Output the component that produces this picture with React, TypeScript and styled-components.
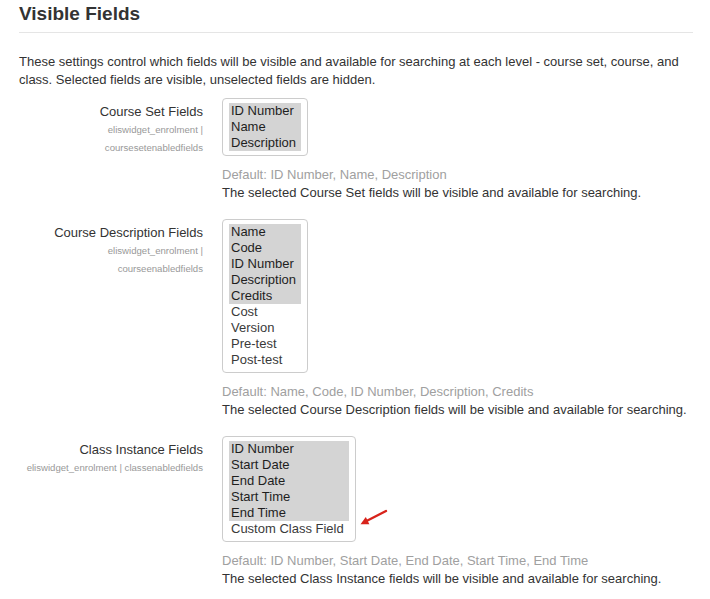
import React from "react";
import styled, { createGlobalStyle } from "styled-components";

const GlobalStyle = createGlobalStyle`
  html, body {
    margin: 0;
    padding: 0;
    background: #ffffff;
  }
  body {
    font-family: "Liberation Sans", Arial, Helvetica, sans-serif;
    color: #333333;
    -webkit-font-smoothing: antialiased;
  }
`;

const Page = styled.div`
  width: 674px;
  padding: 3px 0 0 19px;
  font-size: 13px;
  line-height: 18px;
`;

const Heading = styled.h2`
  margin: 0;
  padding-bottom: 7px;
  font-size: 19px;
  line-height: 22px;
  font-weight: 700;
  color: #333333;
  border-bottom: 1px solid #e5e5e5;
`;

const Intro = styled.p`
  margin: 20px 0 9px;
  color: #333333;
`;

const SettingRow = styled.div`
  display: grid;
  grid-template-columns: 184px 1fr;
  column-gap: 19px;
  margin-bottom: 17px;
`;

const LabelCol = styled.div`
  padding-top: 5px;
  text-align: right;
`;

const LabelText = styled.div`
  color: #333333;
`;

const SettingName = styled.div`
  font-size: 9.6px;
  line-height: 18px;
  color: #999999;
`;

const ContentCol = styled.div`
  display: flex;
  flex-direction: column;
  align-items: flex-start;
`;

const SelectWrap = styled.div`
  position: relative;
  display: inline-block;
`;

const ListBox = styled.div`
  display: inline-flex;
  flex-direction: column;
  padding: 4px 6px;
  border: 1px solid #cccccc;
  border-radius: 4px;
  background: #ffffff;
`;

const Option = styled.div<{ $selected?: boolean }>`
  padding: 0 5px 0 2px;
  line-height: 16px;
  font-size: 13px;
  white-space: nowrap;
  color: ${(p) => (p.$selected ? "#1e1e1e" : "#3a3a3a")};
  background: ${(p) => (p.$selected ? "#d4d4d4" : "transparent")};
`;

const Arrow = styled.svg`
  position: absolute;
  left: calc(100% + 2px);
  top: 72px;
  overflow: visible;
`;

const Description = styled.div`
  margin-top: 10px;
`;

const DefaultText = styled.div`
  color: #a0a0a0;
`;

const HelpText = styled.div`
  color: #333333;
`;

type Field = { name: string; selected: boolean };

type Setting = {
  label: string;
  nameLines: string[];
  fields: Field[];
  defaults: string;
  help: string;
  arrow?: boolean;
};

const settings: Setting[] = [
  {
    label: "Course Set Fields",
    nameLines: ["eliswidget_enrolment |", "coursesetenabledfields"],
    fields: [
      { name: "ID Number", selected: true },
      { name: "Name", selected: true },
      { name: "Description", selected: true },
    ],
    defaults: "Default: ID Number, Name, Description",
    help: "The selected Course Set fields will be visible and available for searching.",
  },
  {
    label: "Course Description Fields",
    nameLines: ["eliswidget_enrolment |", "courseenabledfields"],
    fields: [
      { name: "Name", selected: true },
      { name: "Code", selected: true },
      { name: "ID Number", selected: true },
      { name: "Description", selected: true },
      { name: "Credits", selected: true },
      { name: "Cost", selected: false },
      { name: "Version", selected: false },
      { name: "Pre-test", selected: false },
      { name: "Post-test", selected: false },
    ],
    defaults: "Default: Name, Code, ID Number, Description, Credits",
    help: "The selected Course Description fields will be visible and available for searching.",
  },
  {
    label: "Class Instance Fields",
    nameLines: ["eliswidget_enrolment | classenabledfields"],
    fields: [
      { name: "ID Number", selected: true },
      { name: "Start Date", selected: true },
      { name: "End Date", selected: true },
      { name: "Start Time", selected: true },
      { name: "End Time", selected: true },
      { name: "Custom Class Field", selected: false },
    ],
    defaults: "Default: ID Number, Start Date, End Date, Start Time, End Time",
    help: "The selected Class Instance fields will be visible and available for searching.",
    arrow: true,
  },
];

const RedArrow = () => (
  <Arrow width="30" height="18" viewBox="0 0 30 18" aria-hidden="true">
    <line x1="28" y1="3" x2="9" y2="12.8" stroke="#d8231b" strokeWidth="2.4" strokeLinecap="round" />
    <polygon points="2.5,16.3 11.4,16.2 7.8,9" fill="#d8231b" />
  </Arrow>
);

export default function App() {
  return (
    <>
      <GlobalStyle />
      <Page>
        <Heading>Visible Fields</Heading>
        <Intro>
          These settings control which fields will be visible and available for searching at each level - course set,
          course, and class. Selected fields are visible, unselected fields are hidden.
        </Intro>
        {settings.map((s) => (
          <SettingRow key={s.label}>
            <LabelCol>
              <LabelText>{s.label}</LabelText>
              {s.nameLines.map((line) => (
                <SettingName key={line}>{line}</SettingName>
              ))}
            </LabelCol>
            <ContentCol>
              <SelectWrap>
                <ListBox role="listbox" aria-multiselectable="true">
                  {s.fields.map((f) => (
                    <Option key={f.name} role="option" aria-selected={f.selected} $selected={f.selected}>
                      {f.name}
                    </Option>
                  ))}
                </ListBox>
                {s.arrow && <RedArrow />}
              </SelectWrap>
              <Description>
                <DefaultText>{s.defaults}</DefaultText>
                <HelpText>{s.help}</HelpText>
              </Description>
            </ContentCol>
          </SettingRow>
        ))}
      </Page>
    </>
  );
}
